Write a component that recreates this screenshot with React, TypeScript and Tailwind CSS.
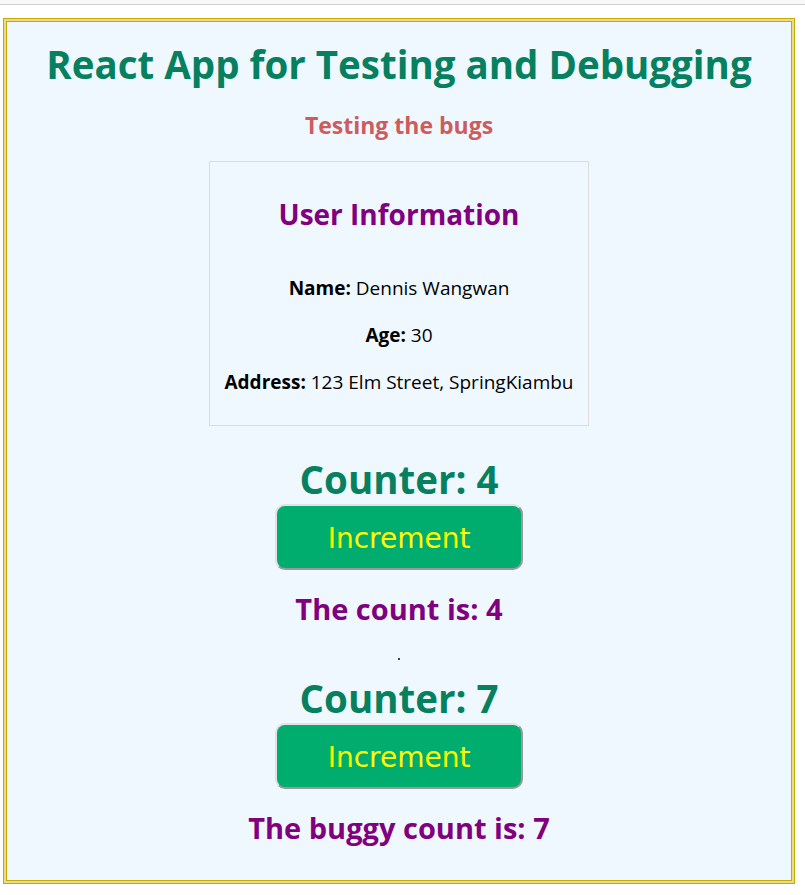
import React, { useState } from 'react';

const font = { fontFamily: '"Open Sans", "Noto Sans", sans-serif' };

const Counter: React.FC<{ start: number; buggy?: boolean }> = ({ start, buggy }) => {
  const [count, setCount] = useState(start);
  return (
    <div className="flex flex-col items-center">
      <h2 className="text-[38.5px] leading-[44px] font-bold text-[#06805f]">Counter: {count}</h2>
      <button
        onClick={() => setCount(c => c + 1)}
        className="mt-[3px] w-[248px] h-[66px] pt-[3px] rounded-[10px] bg-[#00ad6e] text-[#ffff00] text-[28px] border-2 border-t-[#e2e2e2] border-l-[#e2e2e2] border-r-[#9a9a9a] border-b-[#9a9a9a]"
        style={{ fontFamily: '"DejaVu Sans", Verdana, sans-serif' }}
      >
        Increment
      </button>
      <p className="mt-[21px] text-[29px] leading-[36px] font-bold text-[#800080]">
        {buggy ? 'The buggy count is: ' : 'The count is: '}
        {count}
      </p>
    </div>
  );
};

const App: React.FC = () => {
  return (
    <div className="min-h-screen bg-white" style={font}>
      <div className="h-[5px] bg-[#f8f8fa] border-b border-[#d0d0d0]"></div>
      <div className="mt-[13px] ml-[3px] w-[792px] border border-[#c8a900] bg-[#e8da8e] p-[2px]">
        <div className="border border-[#c8a900] bg-[#f0f8ff] flex flex-col items-center text-center pb-[34px]">
          <h1 className="mt-[17px] text-[38.5px] leading-[50px] font-bold text-[#06805f]">
            React App for Testing and Debugging
          </h1>
          <h3 className="mt-[21px] text-[23px] leading-[30px] font-bold text-[#cd5c5c]">Testing the bugs</h3>

          <div className="mt-[21px] w-[380px] h-[265px] border border-[#dcdcdc] flex flex-col items-center">
            <h2 className="mt-[34px] text-[28px] leading-[36px] font-bold text-[#800080]">User Information</h2>
            <div className="mt-[43px] flex flex-col gap-[21px] text-[19px] leading-[26px] text-black">
              <p><span className="font-bold">Name:</span> Dennis Wangwan</p>
              <p><span className="font-bold">Age:</span> 30</p>
              <p><span className="font-bold">Address:</span> 123 Elm Street, SpringKiambu</p>
            </div>
          </div>

          <div className="mt-[31px]">
            <Counter start={4} />
          </div>
          <div className="mt-[27px] h-[10px] flex items-center">
            <span className="block w-[2px] h-[2px] bg-[#444]"></span>
          </div>
          <div className="mt-[12px]">
            <Counter start={7} buggy />
          </div>
        </div>
      </div>
    </div>
  );
};

export default App;
